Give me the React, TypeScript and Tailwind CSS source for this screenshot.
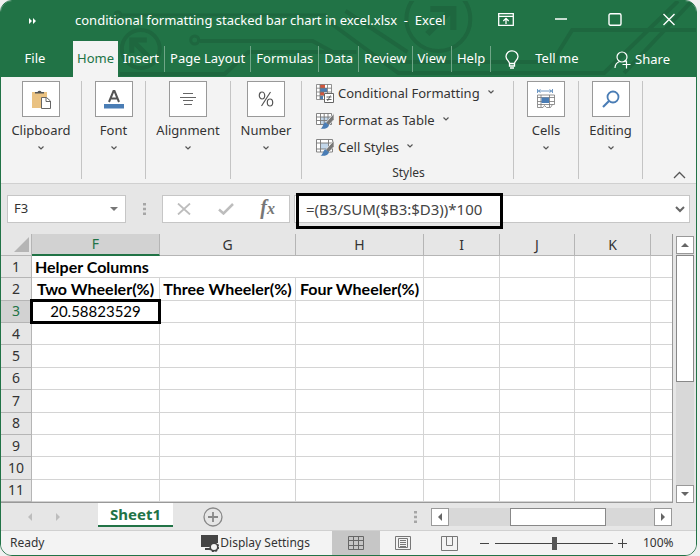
import { useState } from 'react'
import type { ReactNode } from 'react'

const TABS = ['Home', 'Insert', 'Page Layout', 'Formulas', 'Data', 'Review', 'View', 'Help']

const COLUMNS = ['F', 'G', 'H', 'I', 'J', 'K', '']

const ROWS = [1, 2, 3, 4, 5, 6, 7, 8, 9, 10, 11]

const CELLS: Record<string, string> = {
  F1: 'Helper Columns',
  F2: 'Two Wheeler(%)',
  G2: 'Three Wheeler(%)',
  H2: 'Four Wheeler(%)',
  F3: '20.58823529',
}

export default function App() {
  return (
    <div className="min-h-screen bg-[#f0f0f0] pr-[3px] font-['Noto_Sans','Open_Sans',sans-serif] text-[#333]">
      <div className="flex min-h-screen flex-col overflow-hidden rounded-xl border border-[#217346] bg-[#e6e6e6]">
        <header className="relative h-[76px] bg-[#217346] text-white">
          <Circuit />
          <TitleBar />
          <TabBar />
        </header>
        <Ribbon />
        <FormulaBar />
        <main className="flex flex-1">
          <Sheet />
          <VerticalScroll />
        </main>
        <SheetBar />
        <StatusBar />
      </div>
    </div>
  )
}

function Circuit() {
  return (
    <svg
      className="absolute inset-0 h-full w-full"
      viewBox="0 0 696 76"
      preserveAspectRatio="none"
      fill="none"
      stroke="#1e673f"
      strokeWidth="4"
    >
      <circle cx="140" cy="48" r="19" />
      <path d="M149 57L133 41M131 52V39h15" strokeWidth="5" />
      <circle cx="117" cy="14" r="3" strokeWidth="3" />
      <path d="M121 14h205" strokeWidth="3" />
      <circle cx="194" cy="39" r="4" strokeWidth="3" />
      <path d="M199 40h113l20 11h24M119 73h105l24-22h84" />
      <circle cx="438" cy="18" r="32" />
      <path d="M427 33L450 10M430 8h23v21" strokeWidth="6" />
      <path d="M345 10l62 41M330 22l68 50h206L678 0M624 72L692 0M518 61h34l20-32h124" />
      <path d="M400 61h118" />
    </svg>
  )
}

function TitleBar() {
  return (
    <div className="relative flex h-10 items-center">
      <button aria-label="More commands" className="ml-7 w-9">
        <svg width="8" height="6" viewBox="0 0 8 6" fill="#fff">
          <path d="M0 0l3 3-3 3zM4 0l3 3-3 3z" />
        </svg>
      </button>
      <h1 className="ml-[10px] flex-1 text-[13px] whitespace-pre">
        conditional formatting stacked bar chart in excel.xlsx  -  Excel
      </h1>
      <div className="flex items-center gap-10 pr-5 pb-1">
        <button aria-label="Ribbon display options">
          <svg width="16" height="13" viewBox="0 0 16 13" fill="none" stroke="#fff" strokeWidth="1.3">
            <path d="M.7.7h14.6v11.6H.7zM.7 3.3h14.6M8 11V5.5M5.3 8L8 5.3 10.7 8" />
          </svg>
        </button>
        <button aria-label="Minimize">
          <svg width="14" height="13" viewBox="0 0 14 13" stroke="#fff" strokeWidth="1.3">
            <path d="M1 6h12" />
          </svg>
        </button>
        <button aria-label="Maximize">
          <svg width="14" height="13" viewBox="0 0 14 13" fill="none" stroke="#fff" strokeWidth="1.4">
            <rect x="1" y=".8" width="12" height="11.4" rx="1.5" />
          </svg>
        </button>
        <button aria-label="Close">
          <svg width="14" height="13" viewBox="0 0 14 13" stroke="#fff" strokeWidth="1.4">
            <path d="M1.5 1l11 11M12.5 1l-11 11" />
          </svg>
        </button>
      </div>
    </div>
  )
}

function TabBar() {
  return (
    <nav className="relative flex h-9 items-center text-[13px]">
      <button className="w-18 pr-1">File</button>
      {TABS.map((tab) => (
        <button
          key={tab}
          className={
            tab === 'Home'
              ? 'h-9 bg-[#f3f3f3] px-1 text-[#217346]'
              : 'h-[26px] border-r border-[#6fa687] px-[5px]'
          }
        >
          {tab}
        </button>
      ))}
      <button className="ml-[14px] flex items-center gap-4">
        <svg width="14" height="19" viewBox="0 0 14 19" fill="none" stroke="#fff" strokeWidth="1.3">
          <path d="M4.5 13.500c0-2.500-3.500-3.500-3.500-7a6 5.700 0 0112 0c0 3.500-3.500 4.500-3.500 7zM4.500 13.500v2.500h5v-2.500M5 18h4" />
        </svg>
        Tell me
      </button>
      <button className="mt-[2px] mr-[26px] ml-auto flex items-center gap-1">
        <svg width="17" height="18" viewBox="0 0 17 18" fill="none" stroke="#fff" strokeWidth="1.2">
          <circle cx="8" cy="6" r="5" />
          <path d="M1 17c0-3.500 2-5.500 4.500-6.500M10.500 10l1 1M8.500 13.500h8M12.500 9.500v8" />
        </svg>
        Share
      </button>
    </nav>
  )
}

function Ribbon() {
  return (
    <section className="flex h-[107px] border-b border-[#d0d0d0] bg-[#f3f3f3] py-1">
      <Group label="Clipboard" width="w-[81px]">
        <svg width="20" height="20" viewBox="0 0 20 20">
          <path d="M1 3h15v16H1z" fill="#eac282" />
          <path d="M4 4.500V3h2.500a2.200 2.200 0 014 0H13v1.500z" fill="#555" />
          <path d="M10.500 8.500h5l4 3.500v7.500h-9z" fill="#fff" stroke="#666" />
          <path d="M15 8.500v4h4.500" fill="none" stroke="#666" />
        </svg>
      </Group>
      <Group label="Font" width="w-16">
        <svg width="20" height="20" viewBox="0 0 20 20" fill="none">
          <path d="M5 13L9.500 2h1L15 13M6.500 9.500h7" stroke="#555" strokeWidth="2" />
          <path d="M0 15h20v4.500H0z" fill="#4a7db5" />
        </svg>
      </Group>
      <Group label="Alignment" width="w-[85px]">
        <svg width="16" height="12" viewBox="0 0 16 12" stroke="#666">
          <path d="M3 .5h10M0 4.500h16M3 7.500h10M4 11.500h8" />
        </svg>
      </Group>
      <Group label="Number" width="w-[71px]">
        <svg width="16" height="16" viewBox="0 0 16 16" fill="none" stroke="#555" strokeWidth="1.2">
          <ellipse cx="4" cy="4.5" rx="2.7" ry="3.5" />
          <ellipse cx="12" cy="11.5" rx="2.7" ry="3.5" />
          <path d="M12.500 1l-9 14" />
        </svg>
      </Group>

      <div className="flex w-[212px] flex-col border-r border-[#c4c4c4] pl-[14px] text-[13px]">
        <div className="-mt-px">
          <StyleButton label="Conditional Formatting">
            <svg width="18" height="19" viewBox="0 0 18 19" fill="none">
              <path d="M.5.5h15v15H.5z" fill="#fff" />
              <path d="M4 .5h5v3.500H4zM4 8h4v3.500H4z" fill="#d2553d" />
              <path d="M4 4h7v4H4zM4 12h3v3.500H4z" fill="#4a7db5" />
              <path d="M.5.5h15v15H.5zM.5 4.200h15M.5 8h15M.5 11.800h15M4 .5v15M11.500.5v15" stroke="#777" strokeWidth=".8" />
              <path d="M8.500 9.500h9v9h-9z" fill="#fff" stroke="#666" />
              <path d="M10.500 13h5M10.500 15.500h5M14.500 11.500l-3 5.500" stroke="#555" strokeWidth=".9" />
            </svg>
          </StyleButton>
          <StyleButton label="Format as Table">
            <svg width="18" height="17" viewBox="0 0 18 17" fill="none">
              <path d="M.5 1.500h15v11H.5z" fill="#fff" />
              <path d="M4.500 5h11v7.500h-11z" fill="#c3d7ea" />
              <path d="M.5 1.500h15v11H.5zM.5 5h15M.5 8.500h15M4.500 1.500v11M8.200 1.500v11M12 1.500v11" stroke="#777" strokeWidth=".9" />
              <Brush />
            </svg>
          </StyleButton>
          <StyleButton label="Cell Styles">
            <svg width="18" height="17" viewBox="0 0 18 17" fill="none">
              <path d="M.5.5h16v12.500H.5z" fill="#fff" />
              <path d="M4.500 4h8v6h-8z" fill="#c3d7ea" />
              <path d="M.5.5h16V13H.5zM.5 4h16M.5 10h16M4.500.5V13M12.500.5V13" stroke="#777" strokeWidth=".9" />
              <Brush />
            </svg>
          </StyleButton>
        </div>
        <div className="mt-auto pr-3 text-center text-xs leading-3">Styles</div>
      </div>

      <Group label="Cells" width="w-[65px]">
        <svg width="20" height="20" viewBox="0 0 20 20" fill="none" stroke="#777" strokeWidth=".8">
          <path d="M2 2h14M1.500 0v4M16.500 0v4M4.500.5L2.500 2l2 1.500M13.500.5l2 1.500-2 1.500" stroke="#4a7db5" />
          <path d="M1.500 6h17v9.500h-17zM1.500 8.500h17M1.500 12.500h17M5 6v12M13.500 6v12M1.500 15.500v3h5.500l1.500-2 2 2h4l2-3" />
          <path d="M5.500 8.500H13V14H5.500z" fill="#4a7db5" stroke="none" />
        </svg>
      </Group>
      <Group label="Editing" width="w-16">
        <svg width="18" height="18" viewBox="0 0 18 18" fill="none" stroke="#4a7db5" strokeWidth="1.8">
          <circle cx="11" cy="7" r="5.5" />
          <path d="M7 11l-6 6" strokeWidth="2.2" />
        </svg>
      </Group>
      <button aria-label="Collapse the ribbon" className="mt-auto mr-[10px] ml-auto">
        <svg width="13" height="8" viewBox="0 0 13 8" fill="none" stroke="#555" strokeWidth="1.3">
          <path d="M1 7l5.500-5.500L12 7" />
        </svg>
      </button>
    </section>
  )
}

function Group({ label, width, children }: { label: string; width: string; children: ReactNode }) {
  return (
    <button className={`flex shrink-0 flex-col items-center border-r border-[#c4c4c4] text-[13px] ${width}`}>
      <span className="flex h-9 w-[38px] items-center justify-center border border-[#999] bg-white">
        {children}
      </span>
      <span className="mt-1 leading-[18px]">{label}</span>
      <span className="mt-[7px]">
        <Chevron />
      </span>
    </button>
  )
}

function StyleButton({ label, children }: { label: string; children: ReactNode }) {
  return (
    <button className="flex h-[27px] items-center gap-1 whitespace-nowrap">
      {children}
      {label}
      <span className="mb-1 ml-1">
        <Chevron />
      </span>
    </button>
  )
}

function Brush() {
  return (
    <>
      <path d="M18 1.500v6l-5.500 6-3-2.500z" fill="#777" stroke="#f3f3f3" strokeWidth=".7" />
      <path d="M9.500 10.200l3.500 3c-1 3-4 4-8.500 3.500 2.500-1 2.500-5.500 5-6.500z" fill="#4a7db5" />
    </>
  )
}

function Chevron() {
  return (
    <svg width="6" height="4" viewBox="0 0 6 4" fill="none" stroke="#555" strokeWidth="1.2">
      <path d="M.5.5L3 3 5.500.5" />
    </svg>
  )
}

function Dots() {
  return (
    <svg width="3" height="12" viewBox="0 0 3 12" fill="#a6a6a6">
      <path d="M0 0h3v2.500H0zM0 4.700h3v2.500H0zM0 9.500h3V12H0z" />
    </svg>
  )
}

function FormulaBar() {
  const [name, setName] = useState('F3')
  const [formula, setFormula] = useState('=(B3/SUM($B3:$D3))*100')
  return (
    <section className="flex h-[50px] items-start px-[6px] pt-[11px]">
      <div className="flex h-7 w-[119px] items-center border border-[#c6c6c6] bg-white pr-[7px]">
        <input
          aria-label="Name box"
          className="w-full min-w-0 flex-1 pl-[6px] text-[13px] outline-none"
          value={name}
          onChange={(e) => setName(e.target.value)}
        />
        <button aria-label="Open name list">
          <svg width="8" height="4" viewBox="0 0 8 4" fill="#777">
            <path d="M0 0h8L4 4z" />
          </svg>
        </button>
      </div>
      <div className="flex h-7 w-9 items-center justify-center">
        <Dots />
      </div>
      <div className="flex h-7 w-32 items-center justify-between border border-[#c6c6c6] bg-white px-[14px]">
        <button aria-label="Cancel">
          <svg width="14" height="12" viewBox="0 0 14 12" stroke="#bdbdbd" strokeWidth="1.8">
            <path d="M1 .5l12 11M13 .5l-12 11" />
          </svg>
        </button>
        <button aria-label="Enter">
          <svg width="16" height="12" viewBox="0 0 16 12" fill="none" stroke="#bdbdbd" strokeWidth="2.5">
            <path d="M1 6.500l4.500 4L15 1" />
          </svg>
        </button>
        <button
          aria-label="Insert function"
          className="font-['Liberation_Serif',serif] text-xl leading-5 font-bold text-[#777] italic"
        >
          f<span className="text-base">x</span>
        </button>
      </div>
      <div className="relative ml-1 flex h-7 flex-1 items-center border border-[#c6c6c6] bg-white pr-1">
        <input
          aria-label="Formula"
          className="w-full min-w-0 flex-1 pl-[11px] text-[15px] text-[#444] outline-none"
          value={formula}
          onChange={(e) => setFormula(e.target.value)}
        />
        <button aria-label="Expand formula bar">
          <svg width="10" height="7" viewBox="0 0 10 7" fill="none" stroke="#666" strokeWidth="2">
            <path d="M1 1l4 4 4-4" />
          </svg>
        </button>
        <span className="pointer-events-none absolute -top-[3px] left-px h-9 w-[207px] border-3 border-black" />
      </div>
    </section>
  )
}

function Sheet() {
  return (
    <div className="flex-1 border-r border-b border-[#999]">
      <table className="h-[268px] w-full table-fixed border-separate border-spacing-0">
        <colgroup>
          <col className="w-[31px]" />
          <col className="w-[128px]" />
          <col className="w-[136px]" />
          <col className="w-[128px]" />
          <col className="w-[76px]" />
          <col className="w-[75px]" />
          <col className="w-[76px]" />
          <col />
        </colgroup>
        <thead>
          <tr className="h-[22px] text-sm leading-5">
            <th className="border-r border-b border-[#b5b5b5] p-0">
              <svg className="ml-auto mr-[2px]" width="15" height="15" viewBox="0 0 15 15" fill="#b5b5b5">
                <path d="M15 0v15H0z" />
              </svg>
            </th>
            {COLUMNS.map((col) => (
              <th
                key={col}
                className={
                  col === 'F'
                    ? 'border-r border-b-2 border-r-[#b5b5b5] border-b-[#217346] bg-[#d2d2d2] p-0 font-normal text-[#217346]'
                    : 'border-r border-b border-[#b5b5b5] p-0 font-normal last:border-r-0'
                }
              >
                {col}
              </th>
            ))}
          </tr>
        </thead>
        <tbody>
          {ROWS.map((row) => (
            <tr key={row} className="leading-5">
              <th
                className={
                  row === 3
                    ? 'border-r border-b border-[#b5b5b5] bg-[#d2d2d2] p-0 text-sm leading-5 font-normal text-[#217346]'
                    : 'border-r border-b border-[#b5b5b5] p-0 text-sm leading-5 font-normal'
                }
              >
                {row}
              </th>
              {COLUMNS.map((col) => (
                <Cell key={col} id={col + row} />
              ))}
            </tr>
          ))}
        </tbody>
      </table>
    </div>
  )
}

function Cell({ id }: { id: string }) {
  const text = CELLS[id]
  const base =
    "border-b border-[#d4d4d4] bg-white p-0 font-['Lato','Noto_Sans',sans-serif] leading-5 whitespace-nowrap text-black last:border-r-0"
  if (id === 'F3') {
    return (
      <td className={`${base} relative border-r text-center text-[15px]`}>
        {text}
        <span className="absolute -inset-[2px] border-3 border-black" />
      </td>
    )
  }
  if (id === 'F1') return <td className={`${base} pl-[3px] text-base leading-5 font-bold`}>{text}</td>
  if (id === 'G1') return <td className={base} />
  return <td className={`${base} border-r text-center text-base leading-5 font-bold`}>{text}</td>
}

function Arrow({ dir }: { dir: 'up' | 'down' | 'left' | 'right' }) {
  const paths = {
    up: 'M0 6l4-4 4 4z',
    down: 'M0 2h8L4 6z',
    left: 'M6 0v8L2 4z',
    right: 'M2 0l4 4-4 4z',
  }
  return (
    <svg width="8" height="8" viewBox="0 0 8 8" fill="currentColor">
      <path d={paths[dir]} />
    </svg>
  )
}

const SCROLL_BUTTON = 'flex h-[18px] w-[18px] items-center justify-center border border-[#999] bg-white text-[#666]'

function VerticalScroll() {
  return (
    <div className="mt-[2px] mr-[2px] ml-[3px] flex w-[18px] flex-col bg-[#d8d8d8]">
      <button aria-label="Scroll up" className={SCROLL_BUTTON}>
        <Arrow dir="up" />
      </button>
      <div className="mt-px h-[127px] border border-[#888] bg-white" />
      <button aria-label="Scroll down" className={`${SCROLL_BUTTON} mt-auto`}>
        <Arrow dir="down" />
      </button>
    </div>
  )
}

function SheetBar() {
  return (
    <section className="flex h-[27px] items-center pr-6">
      <div className="flex w-[97px] gap-5 pl-[25px] text-[#bdbdbd]">
        <button aria-label="Previous sheet">
          <Arrow dir="left" />
        </button>
        <button aria-label="Next sheet">
          <Arrow dir="right" />
        </button>
      </div>
      <button className="h-6 w-[75px] self-start border-b-2 border-[#217346] bg-white text-[15px] leading-5 font-bold text-[#217346]">
        Sheet1
      </button>
      <button aria-label="New sheet" className="ml-[30px]">
        <svg width="20" height="20" viewBox="0 0 20 20" fill="none" stroke="#888" strokeWidth="1.3">
          <circle cx="10" cy="10" r="9" />
          <path d="M5 10h10M10 5v10" strokeWidth="1.8" />
        </svg>
      </button>
      <div className="mr-[14px] ml-auto">
        <Dots />
      </div>
      <div className="flex w-[241px] bg-[#d8d8d8]">
        <button aria-label="Scroll left" className={SCROLL_BUTTON}>
          <Arrow dir="left" />
        </button>
        <div className="ml-[61px] w-24 border border-[#888] bg-white" />
        <button aria-label="Scroll right" className={`${SCROLL_BUTTON} ml-auto`}>
          <Arrow dir="right" />
        </button>
      </div>
    </section>
  )
}

function StatusBar() {
  const [zoom, setZoom] = useState(100)
  return (
    <footer className="flex h-[25px] items-center border-t border-[#d0d0d0] bg-[#f3f3f3] pl-[9px] text-xs">
      <span>Ready</span>
      <button className="ml-auto flex items-center gap-px">
        <svg width="18" height="17" viewBox="0 0 18 17" fill="none">
          <path d="M0 0h17v8h-5l-4 4H0zM4 13h5v2H4z" fill="#444" />
          <circle cx="13" cy="12" r="3.8" fill="#f3f3f3" stroke="#444" strokeWidth="1.6" />
          <circle cx="13" cy="12" r="4.500" stroke="#444" strokeWidth="1.5" strokeDasharray="2 1.5" />
        </svg>
        Display Settings
      </button>
      <button aria-label="Normal" className="ml-[22px] flex h-6 w-12 items-center justify-center bg-[#c6c6c6]">
        <svg width="16" height="14" viewBox="0 0 16 14" fill="none" stroke="#666">
          <path d="M.5.5h15v13H.5zM.5 4.500h15M.5 9.500h15M5.500.5v13M10.500.5v13" />
        </svg>
      </button>
      <button aria-label="Page layout" className="ml-[15px]">
        <svg width="16" height="14" viewBox="0 0 16 14" fill="none" stroke="#777">
          <path d="M.5.5h15v13H.5zM3.500 2.500h9v9h-9zM5 4.500h6M5 6.500h6M5 8.500h6M5 10.500h6" />
        </svg>
      </button>
      <button aria-label="Page break preview" className="ml-[30px]">
        <svg width="17" height="15" viewBox="0 0 17 15" fill="none" stroke="#777">
          <path d="M.5.5h16v14H.5zM5.500.5v9M5.500 9.500h6M11.500.5v9" />
        </svg>
      </button>
      <button aria-label="Zoom out" className="ml-[22px]">
        <svg width="9" height="9" viewBox="0 0 9 9" stroke="#444">
          <path d="M0 4.500h9" />
        </svg>
      </button>
      <input
        type="range"
        aria-label="Zoom"
        min="0"
        max="200"
        value={zoom}
        onChange={(e) => setZoom(Number(e.target.value))}
        className="ml-[6px] h-[14px] w-[118px] appearance-none bg-transparent [&::-webkit-slider-runnable-track]:h-px [&::-webkit-slider-runnable-track]:bg-[#444] [&::-webkit-slider-thumb]:-mt-[6px] [&::-webkit-slider-thumb]:h-[13px] [&::-webkit-slider-thumb]:w-[5px] [&::-webkit-slider-thumb]:appearance-none [&::-webkit-slider-thumb]:bg-[#555]"
      />
      <button aria-label="Zoom in" className="ml-[5px]">
        <svg width="9" height="9" viewBox="0 0 9 9" stroke="#444">
          <path d="M0 4.500h9M4.500 0v9" />
        </svg>
      </button>
      <span className="w-[69px] pl-4">{zoom}%</span>
    </footer>
  )
}
